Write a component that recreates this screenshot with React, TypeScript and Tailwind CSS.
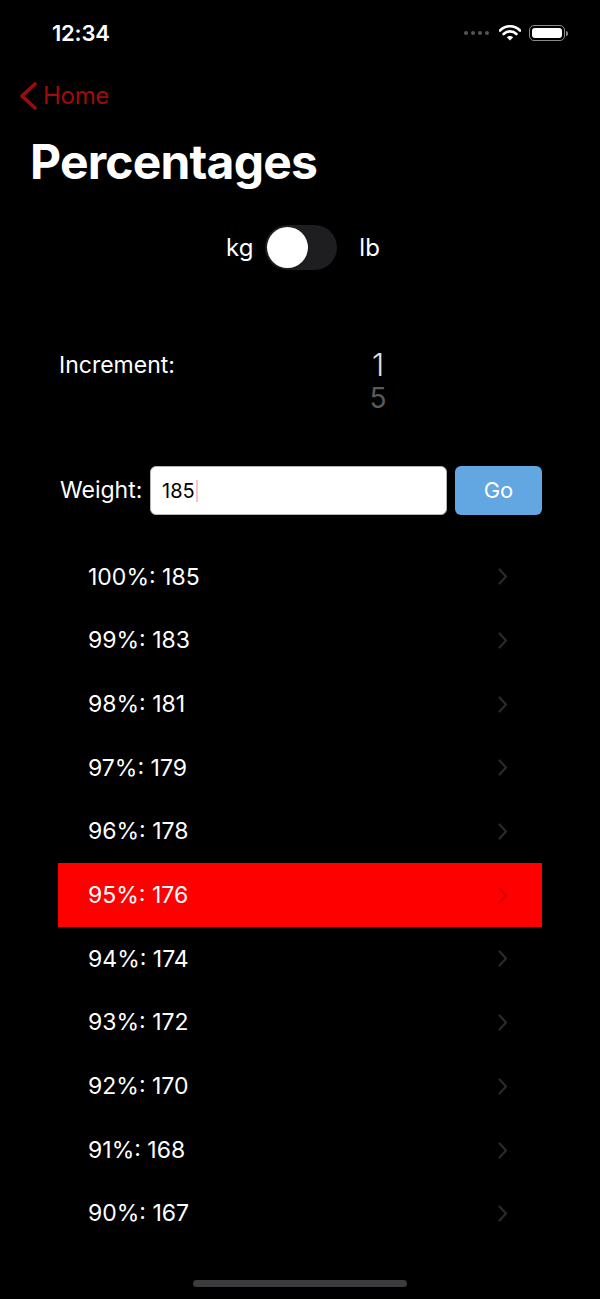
import { useState } from "react";

const ROWS = [
  { pct: 100, w: 185 },
  { pct: 99, w: 183 },
  { pct: 98, w: 181 },
  { pct: 97, w: 179 },
  { pct: 96, w: 178 },
  { pct: 95, w: 176 },
  { pct: 94, w: 174 },
  { pct: 93, w: 172 },
  { pct: 92, w: 170 },
  { pct: 91, w: 168 },
  { pct: 90, w: 167 },
];

function StatusBar() {
  return (
    <div className="flex h-[66px] items-center justify-between pl-[52px] pr-[32px]">
      <span className="text-[22px] font-semibold tracking-[-0.2px]">12:34</span>
      <div className="flex items-center">
        <div className="flex gap-[3px]">
          {[0, 1, 2, 3].map((i) => (
            <span key={i} className="h-[4px] w-[4px] rounded-full bg-[#555]" />
          ))}
        </div>
        <svg width="22" height="16" viewBox="0 0 22 16" className="ml-[10px]">
          <path d="M1 5.5 A14 14 0 0 1 21 5.5" fill="none" stroke="white" strokeWidth="2.6" strokeLinecap="round" />
          <path d="M4.6 9 A9 9 0 0 1 17.4 9" fill="none" stroke="white" strokeWidth="2.6" strokeLinecap="round" />
          <path d="M11 15.5 L7.8 12.2 A4.6 4.6 0 0 1 14.2 12.2 Z" fill="white" />
        </svg>
        <div className="ml-[8px] flex items-center">
          <div className="flex h-[16px] w-[36px] items-center rounded-[5px] border border-[#8a8a8a] p-[2px]">
            <div className="h-full w-full rounded-[3px] bg-white" />
          </div>
          <div className="ml-[1px] h-[5px] w-[2px] rounded-r-sm bg-[#8a8a8a]" />
        </div>
      </div>
    </div>
  );
}

function Chevron({ color }: { color: string }) {
  return (
    <svg width="10" height="17" viewBox="0 0 10 17">
      <path d="M1.5 1.5 L8 8.5 L1.5 15.5" fill="none" stroke={color} strokeWidth="2.2" strokeLinecap="round" strokeLinejoin="round" />
    </svg>
  );
}

export default function App() {
  const [weight, setWeight] = useState("185");
  const selected = 95;

  return (
    <div className="relative h-[1299px] w-[600px] overflow-hidden bg-black text-white [font-family:Inter,'Noto_Sans',sans-serif]">
      <StatusBar />

      {/* nav bar */}
      <div className="flex h-[60px] items-center pl-[18px]">
        <svg width="20" height="28" viewBox="0 0 20 28">
          <path d="M17 2 L4 14 L17 26" fill="none" stroke="#9e0b0b" strokeWidth="3.6" strokeLinecap="round" strokeLinejoin="round" />
        </svg>
        <span className="ml-[5px] text-[24px] text-[#9e0b0b] tracking-[-0.3px]">Home</span>
      </div>

      <h1 className="flex h-[72px] items-center pl-[30px] text-[48px] font-bold tracking-[-0.8px]">Percentages</h1>

      {/* unit toggle */}
      <div className="mt-[27px] flex h-[45px] items-center pl-[226px]">
        <span className="text-[24px]">kg</span>
        <div className="ml-[12px] flex h-[45px] w-[72px] items-center rounded-full bg-[#1e1e20] px-[2px]">
          <div className="h-[41px] w-[41px] rounded-full bg-white shadow" />
        </div>
        <span className="ml-[22px] text-[24px]">lb</span>
      </div>

      <div className="px-[58px]">
        {/* increment picker */}
        <div className="mt-[78px] flex">
          <div className="w-[290px] pl-[1px] text-[23px] leading-[34px]">Increment:</div>
          <div className="flex w-[60px] flex-col items-center">
            <span className="text-[31px] font-light leading-[34px] text-[#e2e2e2]">1</span>
            <span className="text-[28px] leading-[32px] text-[#5a5a5a]">5</span>
          </div>
        </div>

        {/* weight entry */}
        <div className="mt-[52px] flex h-[49px] items-center gap-[8px]">
          <span className="w-[84px] pl-[2px] text-[23px]">Weight:</span>
          <div className="flex h-full flex-1 items-center rounded-[6px] border border-[#b5b5b5] bg-white pl-[11px]">
            <input
              value={weight}
              onChange={(e) => setWeight(e.target.value)}
              className="w-[34px] bg-transparent text-[20px] text-black outline-none"
            />
            <span className="h-[22px] w-[2px] bg-[#f7c3cf]" />
          </div>
          <button className="h-full w-[87px] rounded-[6px] bg-[#62a6e2] text-[22px] text-white">Go</button>
        </div>

        {/* percentage list */}
        <ul className="mt-[30px]">
          {ROWS.map((r) => {
            const active = r.pct === selected;
            return (
              <li
                key={r.pct}
                className={`flex h-[63.7px] items-center justify-between pl-[30px] pr-[34px] text-[23px] ${active ? "bg-[#ff0000]" : ""}`}
              >
                <span>
                  {r.pct}%: {r.w}
                </span>
                <Chevron color={active ? "#d80000" : "#2a2a2c"} />
              </li>
            );
          })}
        </ul>
      </div>

      <div className="absolute bottom-[12px] left-[193px] h-[7px] w-[214px] rounded-full bg-[#3c3c3e]" />
    </div>
  );
}
